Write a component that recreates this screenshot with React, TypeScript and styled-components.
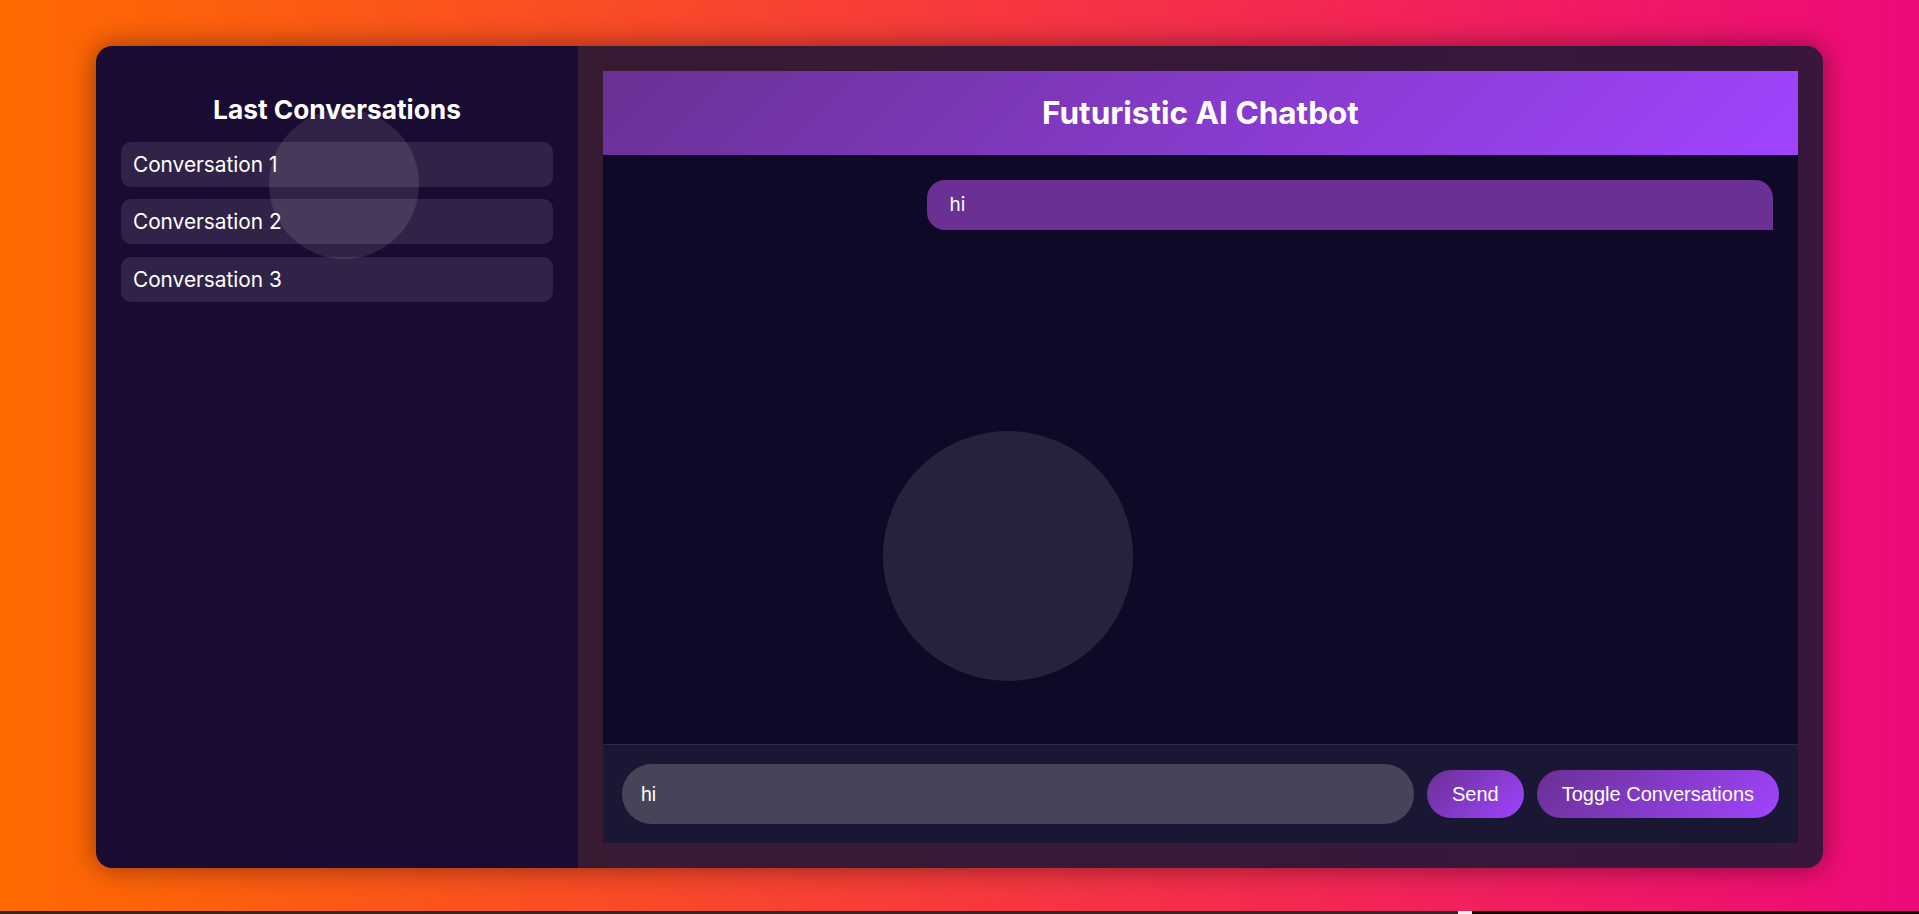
import React from 'react'
import styled, { createGlobalStyle } from 'styled-components'

const GlobalStyle = createGlobalStyle`
  html, body {
    margin: 0;
    padding: 0;
    height: 100%;
  }
  body {
    font-family: Inter, "Liberation Sans", sans-serif;
    color: #fff;
  }
  * {
    box-sizing: border-box;
  }
`

const Page = styled.div`
  position: relative;
  height: 100vh;
  display: flex;
  justify-content: center;
  align-items: center;
  background: linear-gradient(to right, #ff6a00, #ee0979);
  overflow: hidden;
`

const ScrollStrip = styled.div`
  position: absolute;
  left: 0;
  right: 0;
  bottom: 0;
  height: 3px;
  background: linear-gradient(to right, #2a2a2a 76%, #f2f2f2 76%, #f2f2f2 76.7%, #050505 76.7%);
`

const Shell = styled.div`
  position: relative;
  width: 90%;
  height: 90vh;
  display: flex;
  border-radius: 16px;
  overflow: hidden;
  box-shadow: 0 0 28px rgba(0, 0, 0, 0.45);
`

const Sidebar = styled.aside`
  flex: 0 0 482px;
  display: flex;
  flex-direction: column;
  gap: 12.5px;
  padding: 25px;
  background: #1a0b33;
`

const SideTitle = styled.h2`
  margin: 23px 0 3.5px;
  font-size: 26.3px;
  line-height: 32px;
  font-weight: 700;
  text-align: center;
`

const ConvItem = styled.div`
  height: 45px;
  padding: 0 12px;
  line-height: 45px;
  font-size: 20.8px;
  border-radius: 10px;
  background: rgba(255, 255, 255, 0.1);
`

const Main = styled.main`
  flex: 1;
  display: flex;
  padding: 25px;
  background: linear-gradient(to right, #361b33, #38163d);
`

const ChatBox = styled.section`
  flex: 1;
  display: flex;
  flex-direction: column;
`

const Header = styled.header`
  height: 84px;
  display: flex;
  justify-content: center;
  align-items: center;
  background: linear-gradient(135deg, #6a3093, #a044ff);
`

const HeaderTitle = styled.h1`
  margin: 0;
  font-size: 31.5px;
  font-weight: 700;
`

const Messages = styled.div`
  flex: 1;
  display: flex;
  flex-direction: column;
  padding: 25px;
  background: #0f0826;
`

const Bubble = styled.div<{ $user?: boolean }>`
  align-self: ${p => (p.$user ? 'flex-end' : 'flex-start')};
  box-sizing: content-box;
  width: 70%;
  padding: 12px 22px;
  font-size: 19px;
  line-height: 26px;
  border-radius: ${p => (p.$user ? '18px 18px 0 18px' : '18px 18px 18px 0')};
  background: ${p => (p.$user ? '#6a3093' : '#2a2540')};
`

const InputBar = styled.div`
  display: flex;
  align-items: center;
  gap: 13px;
  padding: 19px;
  border-top: 1px solid #2c2945;
  background: #191733;
`

const MessageInput = styled.input`
  flex: 1;
  height: 60px;
  padding: 0 19px;
  border: none;
  outline: none;
  border-radius: 30px;
  background: #474459;
  color: #fff;
  font-family: "Liberation Sans", Arial, sans-serif;
  font-size: 19.5px;
`

const PillButton = styled.button`
  padding: 12px 25px;
  border: none;
  border-radius: 24px;
  background: linear-gradient(135deg, #6a3093, #a044ff);
  color: #fff;
  font-family: "Liberation Sans", Arial, sans-serif;
  font-size: 20px;
  line-height: 24px;
  cursor: pointer;
`

const Glow = styled.div<{ $size: number; $top: number; $left: number }>`
  position: absolute;
  top: ${p => p.$top}px;
  left: ${p => p.$left}px;
  width: ${p => p.$size}px;
  height: ${p => p.$size}px;
  border-radius: 50%;
  background: rgba(255, 255, 255, 0.1);
  pointer-events: none;
`

const conversations = ['Conversation 1', 'Conversation 2', 'Conversation 3']

export default function App() {
  return (
    <>
      <GlobalStyle />
      <Page>
        <Shell>
          <Sidebar>
            <SideTitle>Last Conversations</SideTitle>
            {conversations.map(c => (
              <ConvItem key={c}>{c}</ConvItem>
            ))}
          </Sidebar>
          <Main>
            <ChatBox>
              <Header>
                <HeaderTitle>Futuristic AI Chatbot</HeaderTitle>
              </Header>
              <Messages>
                <Bubble $user>hi</Bubble>
              </Messages>
              <InputBar>
                <MessageInput defaultValue="hi" />
                <PillButton>Send</PillButton>
                <PillButton>Toggle Conversations</PillButton>
              </InputBar>
            </ChatBox>
          </Main>
          <Glow $size={150} $top={63} $left={173} />
          <Glow $size={250} $top={385} $left={787} />
        </Shell>
        <ScrollStrip />
      </Page>
    </>
  )
}
